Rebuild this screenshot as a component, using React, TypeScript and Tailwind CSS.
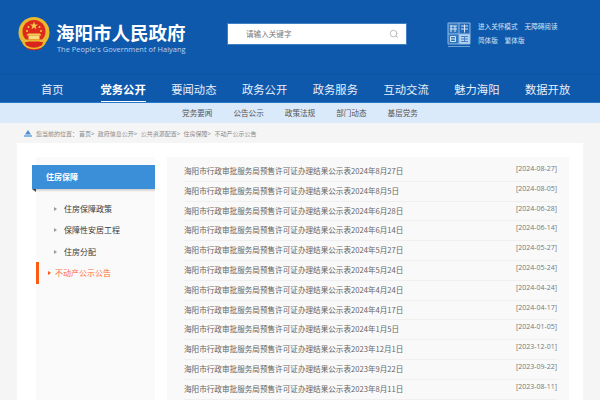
import React from 'react';
import { Search as SearchIcon } from 'lucide-react';

const CJK = "font-['Noto_Sans_CJK_SC','Liberation_Sans',sans-serif]";

const navItems = ['首页', '党务公开', '要闻动态', '政务公开', '政务服务', '互动交流', '魅力海阳', '数据开放'];
const subNavItems = ['党务要闻', '公告公示', '政策法规', '部门动态', '基层党务'];
const crumbs = ['首页>', '政府信息公开>', '公共资源配置>', '住房保障>', '不动产公示公告'];
const sideItems = ['住房保障政策', '保障性安居工程', '住房分配'];

const rows = [
    ['2024年8月27日', '2024-08-27'],
    ['2024年8月5日', '2024-08-05'],
    ['2024年6月28日', '2024-06-28'],
    ['2024年6月14日', '2024-06-14'],
    ['2024年5月27日', '2024-05-27'],
    ['2024年5月24日', '2024-05-24'],
    ['2024年4月24日', '2024-04-24'],
    ['2024年4月17日', '2024-04-17'],
    ['2024年1月5日', '2024-01-05'],
    ['2023年12月1日', '2023-12-01'],
    ['2023年9月22日', '2023-09-22'],
    ['2023年8月11日', '2023-08-11']
];

// National emblem, simplified
const Emblem: React.FC = () => (
    <svg width="32" height="34" viewBox="0 0 32 34">
        <circle cx="16" cy="15.5" r="15.5" fill="#e9b92f" />
        <circle cx="16" cy="14.5" r="11.5" fill="#dd2a1d" />
        <polygon points="16,4.5 17,7.5 20,7.5 17.6,9.3 18.5,12.2 16,10.4 13.5,12.2 14.4,9.3 12,7.5 15,7.5" fill="#f4cf4a" />
        <circle cx="10.5" cy="10" r="1" fill="#f4cf4a" />
        <circle cx="21.5" cy="10" r="1" fill="#f4cf4a" />
        <circle cx="9" cy="14" r="1" fill="#f4cf4a" />
        <circle cx="23" cy="14" r="1" fill="#f4cf4a" />
        <path d="M10 16.5h12l1.5 2h-15z" fill="#f4cf4a" />
        <rect x="10.5" y="18.5" width="11" height="4" fill="#f6dc7a" />
        <rect x="7" y="22.5" width="18" height="2" fill="#e9b92f" />
        <path d="M7 25h18l-2 7q-7 2.5-14 0z" fill="#d8261c" />
        <path d="M5 26q3 5 11 5.5q8-.5 11-5.5" fill="none" stroke="#e9b92f" strokeWidth="1.5" />
    </svg>
);

// Pale square stamp next to the language links
const Stamp: React.FC = () => (
    <svg width="24" height="26" viewBox="0 0 24 26">
        <rect x="0.5" y="0.5" width="23" height="22" rx="1" fill="#8dbae6" />
        <rect x="1.5" y="1.5" width="10" height="10" fill="#2f76c0" />
        <rect x="12.5" y="1.5" width="10" height="10" fill="#2169b6" />
        <rect x="1.5" y="12.5" width="10" height="9" fill="#2f76c0" />
        <rect x="12.5" y="12.5" width="10" height="9" fill="#b5d2ee" />
        <path d="M3 4h7M3 7h7M4 3v7M8 4v6M14 4h7M14 7h7M17.500 2.500v8M3.500 14.500h5v5h-5zM3.500 17h5" stroke="#d6e6f6" strokeWidth="1" fill="none" />
        <path d="M14 14.500h7M14 17h7M14 19.500h7M17.500 14v6" stroke="#3f7fc2" strokeWidth="1" fill="none" />
        <rect x="1" y="24" width="22" height="1" fill="#6fa2d6" />
    </svg>
);

const App: React.FC = () => {
    return (
        <div className={`h-[400px] w-[600px] overflow-hidden bg-[#f5f5f5] ${CJK}`}>
            <header className="bg-[#0f59ac]">
                {/* Logo, search, links */}
                <div className="flex h-[74px] items-start pl-[18px]">
                    <div className="mt-[17px]">
                        <Emblem />
                    </div>
                    <div className="ml-[7px] mt-[19px] w-[131px]">
                        <div className="ml-[-1px] text-[18.5px] font-bold leading-[26px] whitespace-nowrap text-white">海阳市人民政府</div>
                        <div className="mt-[-1px] text-[7.4px] leading-[10px] tracking-[0.04px] whitespace-nowrap text-[#b9d3ee] font-['Open_Sans',sans-serif]">
                            The People's Government of Haiyang
                        </div>
                    </div>
                    <div className="ml-[39px] mt-[23px] flex h-[22px] w-[180px] items-center justify-between border border-[#3f7fc2] bg-white pl-[18px] pr-[7px]">
                        <span className="text-[7.6px] text-[#777]">请输入关键字</span>
                        <SearchIcon className="h-[10px] w-[10px] text-[#999]" strokeWidth={1.5} />
                    </div>
                    <div className="ml-[40px] mt-[22px]">
                        <Stamp />
                    </div>
                    <div className="ml-[7px] mt-[19px] text-[6.6px] leading-[14px] text-[#d5e5f6]">
                        <div className="flex gap-[7px] whitespace-nowrap">
                            <span>进入关怀模式</span>
                            <span>无障碍阅读</span>
                        </div>
                        <div className="flex gap-[7px] whitespace-nowrap">
                            <span>简体版</span>
                            <span>繁体版</span>
                        </div>
                    </div>
                </div>

                {/* Main nav */}
                <nav className="border-t border-[#0d54a3] pl-[17px]">
                    <ul className="grid h-[27px] w-[566px] grid-cols-8">
                        {navItems.map((item, i) => (
                            <li key={item} className="flex justify-center">
                                <a className={`block h-[27px] text-[11.3px] leading-[28px] whitespace-nowrap ${i === 1 ? 'border-b border-white font-bold text-white' : 'text-[#e6f0fb]'}`}>
                                    {item}
                                </a>
                            </li>
                        ))}
                    </ul>
                </nav>
            </header>

            {/* Sub nav */}
            <div className="flex h-[21px] items-center justify-center gap-[21px] border-t border-[#2a78c8] bg-[#dbeafa] pb-[1px] text-[7.6px] text-[#555]">
                {subNavItems.map(item => (
                    <span key={item}>{item}</span>
                ))}
            </div>

            {/* Breadcrumb */}
            <div className="flex h-[20px] items-center pl-[24px] text-[6px] text-[#888]">
                <svg width="8" height="7" viewBox="0 0 8 7" className="mr-[4px]">
                    <path d="M4 0 7 4.500H1z" fill="#4f8fd0" />
                    <rect x="0" y="5" width="8" height="2" fill="#8ab6e2" />
                </svg>
                <span className="mr-[1px]">{'您当前的位置\uFF1A'}</span>
                {crumbs.map(c => (
                    <span key={c} className="mr-[3.500px]">{c}</span>
                ))}
            </div>

            {/* Main card */}
            <div className="mx-[17px] flex h-[258px] bg-white pl-[19px] pt-[14px]">
                <aside className="h-full w-[119px] bg-[#fafafa]">
                    <div className="relative ml-[-4px] mt-[8px] flex h-[24px] w-[123px] items-center bg-[#3b8fd9] pl-[14px] text-[8px] font-bold text-white">
                        住房保障
                        <span className="absolute left-0 top-full h-0 w-0 border-l-[4px] border-t-[3px] border-l-transparent border-t-[#444]" />
                        <span className="absolute left-[4px] right-0 top-full h-[3px] bg-gradient-to-b from-[#cfcac6] to-[#fafafa]" />
                    </div>
                    <ul className="mt-[9.500px]">
                        {sideItems.map(item => (
                            <li key={item} className="flex h-[21.300px] items-center pl-[18px] text-[8px] text-[#3a3a3a]">
                                <span className="mr-[7px] h-0 w-0 border-y-[2px] border-l-[3px] border-y-transparent border-l-[#999]" />
                                {item}
                            </li>
                        ))}
                        <li className="flex h-[21.300px] items-center border-l-[3px] border-[#ff5a14] pl-[9px] text-[8px] text-[#ff6a3a]">
                            <span className="mr-[4px] h-0 w-0 border-y-[2px] border-l-[3px] border-y-transparent border-l-[#ff5a14]" />
                            不动产公示公告
                        </li>
                    </ul>
                </aside>

                <main className="ml-[12px] h-full w-[402px] bg-[#f9f9f9] pl-[17px] pr-[12px] pt-[5px]">
                    <ul>
                        {rows.map(([label, date]) => (
                            <li key={date} className="flex h-[19.800px] items-start justify-between border-b border-[#f0f0f0]">
                                <span className="text-[7.6px] leading-[18px] whitespace-nowrap text-[#666]">
                                    海阳市行政审批服务局预售许可证办理结果公示表{label}
                                </span>
                                <span className="text-[7px] leading-[13.500px] whitespace-nowrap text-[#777] font-['Open_Sans',sans-serif]">
                                    [{date}]
                                </span>
                            </li>
                        ))}
                    </ul>
                </main>
            </div>
        </div>
    );
};

export default App;
